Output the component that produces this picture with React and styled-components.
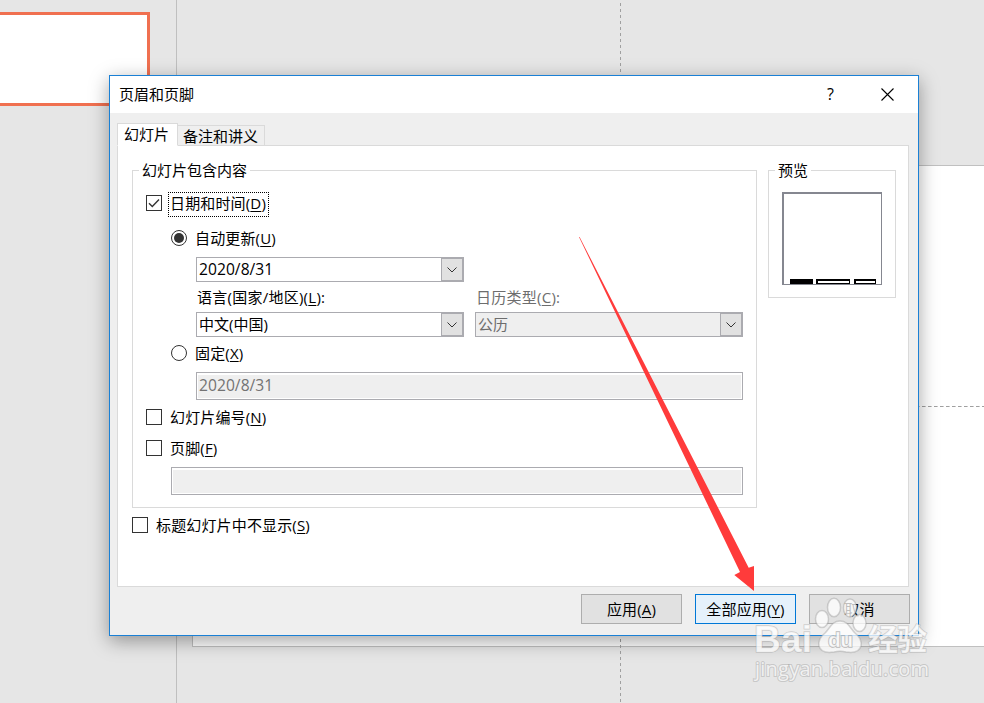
import styled, { createGlobalStyle, css } from 'styled-components'

export default function App() {
    return (
        <>
            <GlobalStyle />
            <Screen>
                <Thumbs>
                    <Thumb />
                </Thumbs>
                <Workspace>
                    <Slide>
                        <GuideAcross />
                    </Slide>
                    <Guide />
                </Workspace>
                <Dialog>
                    <TitleBar>
                        <h1>页眉和页脚</h1>
                        <span>?</span>
                        <CloseIcon viewBox="0 0 13 13">
                            <path d="M0.5 0.5L12.5 12.5M12.5 0.5L0.5 12.5" />
                        </CloseIcon>
                    </TitleBar>
                    <Tabs>
                        <Tab $active>幻灯片</Tab>
                        <Tab>备注和讲义</Tab>
                    </Tabs>
                    <Panel>
                        <Content>
                            <Group>
                                <Legend>幻灯片包含内容</Legend>
                                <Option $top="19px">
                                    <Check checked />
                                    <Focus>日期和时间(<u>D</u>)</Focus>
                                </Option>
                                <Indent>
                                    <Option $top="11px">
                                        <Radio $on />
                                        <Label>自动更新(<u>U</u>)</Label>
                                    </Option>
                                    <Fields>
                                        <Combo><Digits>2020/8/31</Digits></Combo>
                                        <Columns>
                                            <FieldLabel>语言(国家/地区)(<u>L</u>):</FieldLabel>
                                            <FieldLabel $disabled>日历类型(<u>C</u>):</FieldLabel>
                                        </Columns>
                                        <Columns>
                                            <Combo>中文(中国)</Combo>
                                            <Combo $disabled>公历</Combo>
                                        </Columns>
                                    </Fields>
                                    <Option $top="4px">
                                        <Radio />
                                        <Label>固定(<u>X</u>)</Label>
                                    </Option>
                                    <Fields>
                                        <Input><Digits>2020/8/31</Digits></Input>
                                    </Fields>
                                </Indent>
                                <Option $top="5px">
                                    <Check />
                                    <Label>幻灯片编号(<u>N</u>)</Label>
                                </Option>
                                <Option $top="7px">
                                    <Check />
                                    <Label>页脚(<u>F</u>)</Label>
                                </Option>
                                <Indent $top="7px">
                                    <Input />
                                </Indent>
                            </Group>
                            <Option $top="5px">
                                <Check />
                                <Label>标题幻灯片中不显示(<u>S</u>)</Label>
                            </Option>
                        </Content>
                        <Preview>
                            <Legend>预览</Legend>
                            <Page>
                                <Bar $width="23px" $gap="3px" $filled />
                                <Bar $width="34px" $gap="4px" />
                                <Bar $width="22px" />
                            </Page>
                        </Preview>
                    </Panel>
                    <Actions>
                        <Button>应用(<u>A</u>)</Button>
                        <Button $primary>全部应用(<u>Y</u>)</Button>
                        <Button>取消</Button>
                    </Actions>
                </Dialog>
                <Arrow viewBox="0 0 176 355">
                    <path d="M0 0L161 335L155.3 338L175 354V329L169.7 330.7L0.6 0Z" />
                </Arrow>
                <Watermark />
            </Screen>
        </>
    )
}

function Check({ checked }) {
    return (
        <Box>
            {checked && (
                <svg viewBox="0 0 14 14">
                    <path d="M2 7.2L5.3 10.5L12 3.5" />
                </svg>
            )}
        </Box>
    )
}

function Combo({ children, $disabled }) {
    return (
        <Select $disabled={$disabled}>
            <span>{children}</span>
            <Drop>
                <svg viewBox="0 0 10 6">
                    <path d="M0.5 0.5L5 5L9.5 0.5" />
                </svg>
            </Drop>
        </Select>
    )
}

function Watermark() {
    return (
        <Mark viewBox="0 0 195 100">
            <ellipse cx="77" cy="29" rx="6.5" ry="8.5" />
            <ellipse cx="89" cy="17.5" rx="6.5" ry="9.2" />
            <ellipse cx="105" cy="18" rx="6.5" ry="9" />
            <ellipse cx="114.5" cy="33" rx="6.5" ry="8.5" />
            <path d="M95 31C103 31 105 38 110 43C115 47 117 51 116 56C114 63 107 63 101 62C97 61 93 61 89 62C83 63 76 63 74 56C73 51 75 47 80 43C85 38 87 31 95 31Z" />
            <text x="9" y="61.5" fontSize="37" textLength="58">Bai</text>
            <MarkInner x="83" y="57" fontSize="21" textLength="25">du</MarkInner>
            <text x="123" y="60" fontSize="30" textLength="59">经验</text>
            <MarkUrl x="10" y="86" textLength="174">jingyan.baidu.com</MarkUrl>
        </Mark>
    )
}

const GlobalStyle = createGlobalStyle`
    * {
        box-sizing: border-box;
    }
    body {
        margin: 0;
        overflow: hidden;
        font-family: 'Open Sans', 'Noto Sans CJK SC', sans-serif;
        font-size: 15px;
        line-height: 20px;
        color: #000000;
    }
    u {
        text-decoration-thickness: 1px;
        text-underline-offset: 2px;
    }
`;
const Screen = styled.div`
    position: relative;
    display: flex;
    width: 984px;
    height: 703px;
    overflow: hidden;
    background-color: #E6E6E6;
`;
const Thumbs = styled.div`
    width: 177px;
    padding-top: 12px;
    border-right: 1px solid #BFBFBF;
`;
const Thumb = styled.div`
    width: 150px;
    height: 94px;
    background-color: #FFFFFF;
    border: 3px solid #F07050;
    border-left: none;
`;
const Workspace = styled.div`
    position: relative;
    flex: 1;
    padding: 165px 0 0 15px;
`;
const Guide = styled.div`
    position: absolute;
    top: 0;
    bottom: 0;
    left: 443px;
    width: 1px;
    background: repeating-linear-gradient(to bottom, transparent 0 3px, #A0A0A0 3px 6px);
`;
const Slide = styled.div`
    height: 482px;
    padding-top: 240px;
    background-color: #FFFFFF;
    border: 1px solid #C0C0C0;
    border-right: none;
`;
const GuideAcross = styled.div`
    height: 1px;
    background: repeating-linear-gradient(to right, #C8C8C8 0 1px, transparent 1px 3px, #A0A0A0 3px 6px);
`;
const Dialog = styled.div`
    position: absolute;
    left: 109px;
    top: 75px;
    width: 810px;
    height: 561px;
    background-color: #EFEFEF;
    border: 1px solid #1A80D5;
    box-shadow: 0 5px 18px rgba(0, 0, 0, 0.36);
`;
const TitleBar = styled.div`
    display: flex;
    align-items: center;
    height: 37px;
    padding: 0 24px 0 9px;
    background-color: #FFFFFF;
    h1 {
        flex: 1;
        margin: 0 0 2px;
        font-weight: 400;
        font-size: 15px;
        line-height: 20px;
    }
    span {
        margin: 0 47px 2px 0;
        font-size: 16px;
    }
`;
const CloseIcon = styled.svg`
    width: 13px;
    height: 13px;
    fill: none;
    stroke: #000000;
    stroke-width: 1.1;
`;
const Tabs = styled.div`
    display: flex;
    align-items: flex-end;
    height: 33px;
    padding-left: 7px;
`;
const Tab = styled.div`
    width: 87px;
    height: 21px;
    padding-left: 5px;
    border: 1px solid #DADADA;
    border-left: none;
    ${({ $active }) => $active && css`
        z-index: 1;
        width: 61px;
        height: 23px;
        padding-left: 6px;
        background-color: #FFFFFF;
        border-left: 1px solid #DADADA;
        border-bottom-color: #FFFFFF;
    `}
`;
const Panel = styled.div`
    display: flex;
    align-items: flex-start;
    gap: 11px;
    width: 792px;
    height: 442px;
    margin: -1px 0 0 7px;
    padding: 24px 0 0 14px;
    background-color: #FFFFFF;
    border: 1px solid #DADADA;
`;
const Content = styled.div`
    width: 625px;
`;
const Group = styled.div`
    height: 338px;
    padding: 0 13px;
    border: 1px solid #DADADA;
`;
const Legend = styled.div`
    width: fit-content;
    height: 2px;
    margin: -1px 0 0 -7px;
    padding: 0 3px;
    line-height: 0;
    background-color: #FFFFFF;
`;
const Option = styled.div`
    display: flex;
    align-items: center;
    height: 24px;
    margin-top: ${({ $top }) => $top};
    letter-spacing: 0.15px;
`;
const Box = styled.div`
    width: 16px;
    height: 16px;
    border: 1px solid #333333;
    svg {
        display: block;
        fill: none;
        stroke: #333333;
        stroke-width: 1.4;
    }
`;
const Label = styled.span`
    margin-left: 8px;
    white-space: nowrap;
`;
const Focus = styled.span`
    flex-shrink: 0;
    width: 101px;
    height: 25px;
    margin: 3px 0 0 6px;
    padding-left: 1px;
    line-height: 21px;
    border: 1px dotted #000000;
    white-space: nowrap;
`;
const Radio = styled.div`
    width: 16px;
    height: 16px;
    border: 1px solid #333333;
    border-radius: 50%;
    ${({ $on }) => $on && css`
        padding: 2px;
        background: #333333 content-box;
    `}
`;
const Indent = styled.div`
    padding: ${({ $top }) => $top || 0} 0 0 25px;
`;
const Fields = styled.div`
    padding: 7px 0 0 25px;
`;
const Columns = styled.div`
    display: flex;
    gap: 11px;
`;
const FieldLabel = styled.div`
    width: 268px;
    height: 30px;
    padding-left: 1px;
    line-height: 30px;
    letter-spacing: 0.25px;
    color: ${({ $disabled }) => $disabled ? '#6D6D6D' : '#000000'};
`;
const Select = styled.div`
    display: flex;
    justify-content: space-between;
    width: 268px;
    height: 25px;
    padding-left: 2px;
    line-height: 23px;
    color: ${({ $disabled }) => $disabled ? '#6D6D6D' : '#000000'};
    background-color: ${({ $disabled }) => $disabled ? '#EFEFEF' : '#FFFFFF'};
    border: 1px solid #ABABB0;
`;
const Drop = styled.div`
    display: flex;
    align-items: center;
    justify-content: center;
    width: 22px;
    height: 23px;
    background-color: #E1E1E1;
    border: 1px solid #ABABB0;
    svg {
        width: 10px;
        height: 6px;
        fill: none;
        stroke: #333333;
    }
`;
const Digits = styled.span`
    font-size: 15.6px;
    letter-spacing: 0.05px;
`;
const Input = styled.div`
    height: 28px;
    padding: 2px;
    line-height: 21px;
    color: #737373;
    background: linear-gradient(#EFEFEF, #EFEFEF) padding-box;
    border: 1px solid #ABABB0;
    box-shadow: inset 1px 1px #FFFFFF, inset -1px -1px #FFFFFF, inset 0 2px #FFFFFF;
`;
const Preview = styled.div`
    width: 128px;
    height: 128px;
    padding: 0 13px;
    border: 1px solid #DADADA;
`;
const Page = styled.div`
    display: flex;
    align-items: flex-end;
    width: 100px;
    height: 93px;
    margin-top: 20px;
    padding-left: 6px;
    border: 1px solid #858790;
    border-width: 2px 1px 1px 2px;
`;
const Bar = styled.div`
    width: ${({ $width }) => $width};
    height: 5px;
    margin-right: ${({ $gap }) => $gap || 0};
    background-color: ${({ $filled }) => $filled ? '#000000' : '#FFFFFF'};
    border: solid #000000;
    border-width: 2px 1px 1px 2px;
`;
const Actions = styled.div`
    display: flex;
    justify-content: flex-end;
    gap: 13px;
    padding: 7px 8px 0 0;
`;
const Button = styled.div`
    width: 101px;
    height: 30px;
    line-height: 28px;
    letter-spacing: 0.15px;
    text-align: center;
    background-color: ${({ $primary }) => $primary ? '#E5F1FB' : '#E1E1E1'};
    border: 1px solid ${({ $primary }) => $primary ? '#0078D7' : '#ADADAD'};
`;
const Arrow = styled.svg`
    position: absolute;
    left: 579px;
    top: 237px;
    width: 176px;
    height: 355px;
    fill: #FF3B3B;
`;
const Mark = styled.svg`
    position: absolute;
    left: 745px;
    top: 590px;
    width: 195px;
    height: 100px;
    fill: rgba(255, 255, 255, 0.75);
    stroke: rgba(150, 150, 150, 0.4);
    stroke-width: 1.5;
    text {
        font-family: 'Liberation Sans', 'Noto Sans CJK SC', sans-serif;
        font-weight: 700;
        paint-order: stroke;
    }
`;
const MarkInner = styled.text`
    stroke: rgba(130, 130, 130, 0.55);
`;
const MarkUrl = styled.text`
    && {
        font-family: 'Open Sans', sans-serif;
        font-size: 20px;
        font-weight: 400;
        stroke-width: 2;
    }
`;
